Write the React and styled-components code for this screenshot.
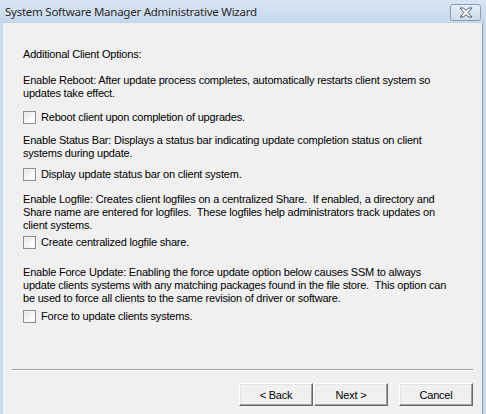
import React from "react";
import styled, { createGlobalStyle } from "styled-components";

const GlobalStyle = createGlobalStyle`
  html, body {
    margin: 0;
    padding: 0;
    background: #c9daee;
  }
`;

const sections = [
  {
    lines: [
      "Enable Reboot: After update process completes, automatically restarts client system so",
      "updates take effect.",
    ],
    label: "Reboot client upon completion of upgrades.",
    top: 13,
    gap: 11,
  },
  {
    lines: [
      "Enable Status Bar: Displays a status bar indicating update completion status on client",
      "systems during update.",
    ],
    label: "Display update status bar on client system.",
    top: 10,
    gap: 8,
  },
  {
    lines: [
      "Enable Logfile: Creates client logfiles on a centralized Share.  If enabled, a directory and",
      "Share name are entered for logfiles.  These logfiles help administrators track updates on",
      "client systems.",
    ],
    label: "Create centralized logfile share.",
    top: 12,
    gap: 4,
  },
  {
    lines: [
      "Enable Force Update: Enabling the force update option below causes SSM to always",
      "update clients systems with any matching packages found in the file store.  This option can",
      "be used to force all clients to the same revision of driver or software.",
    ],
    label: "Force to update clients systems.",
    top: 17,
    gap: 5,
  },
];

export default function App() {
  return (
    <>
      <GlobalStyle />
      <Window>
        <TitleBar>
          <Title>System Software Manager Administrative Wizard</Title>
          <CloseButton>
            <svg width="16" height="11" viewBox="0 0 16 11">
              <path
                d="M2 1h3.5l2.5 2.5 2.5-2.5h3.5l-4 4.5 4 4.5h-3.5l-2.5-2.5-2.5 2.5h-3.5l4-4.5z"
                fill="#fff"
                stroke="#4a5566"
                strokeWidth="1"
                strokeLinejoin="round"
              />
            </svg>
          </CloseButton>
        </TitleBar>
        <Client>
          <Body>
            <Heading>Additional Client Options:</Heading>
            {sections.map((s) => (
              <Section key={s.label} $top={s.top}>
                <Paragraph>
                  {s.lines.map((l) => (
                    <Line key={l}>{l}</Line>
                  ))}
                </Paragraph>
                <CheckRow $gap={s.gap}>
                  <Box />
                  <span>{s.label}</span>
                </CheckRow>
              </Section>
            ))}
          </Body>
          <Footer>
            <Separator />
            <Buttons>
              <ButtonPair>
                <Button>&lt; Back</Button>
                <Button>Next &gt;</Button>
              </ButtonPair>
              <Button>Cancel</Button>
            </Buttons>
          </Footer>
        </Client>
      </Window>
    </>
  );
}

const Window = styled.div`
  width: 486px;
  height: 414px;
  display: flex;
  flex-direction: column;
  background: #c9daee;
  padding: 0 3px 0 3px;
  box-sizing: border-box;
  overflow: hidden;
`;

const TitleBar = styled.div`
  height: 23px;
  flex: none;
  display: flex;
  align-items: flex-start;
  justify-content: space-between;
  margin: 0 -3px;
  padding: 0 5px 0 5px;
  background: linear-gradient(#dae5f3, #c6d7ec);
`;

const Title = styled.div`
  font-family: "Noto Sans", "Open Sans", sans-serif;
  font-size: 11.5px;
  letter-spacing: -0.25px;
  line-height: 23px;
  color: #2a2a2a;
  white-space: nowrap;
`;

const CloseButton = styled.div`
  width: 31px;
  height: 17px;
  margin-top: 4px;
  border: 1px solid #8b9cb4;
  border-radius: 3px;
  box-sizing: border-box;
  background: linear-gradient(#e6eef8, #cfdcec);
  display: flex;
  align-items: center;
  justify-content: center;
`;

const Client = styled.div`
  flex: 1;
  display: flex;
  flex-direction: column;
  background: #f0f0f0;
  border-right: 1px solid #8e9bb0;
`;

const Body = styled.div`
  flex: 1;
  padding: 25px 0 0 20px;
  font-family: "Liberation Sans", Arial, sans-serif;
  font-size: 11px;
  letter-spacing: -0.2px;
  line-height: 13px;
  color: #000;
`;

const Heading = styled.div`
  white-space: pre;
`;

const Section = styled.div`
  margin-top: ${(p) => p.$top}px;
`;

const Paragraph = styled.div``;

const Line = styled.div`
  white-space: pre;
`;

const CheckRow = styled.div`
  margin-top: ${(p) => p.$gap}px;
  display: flex;
  align-items: center;
  gap: 5px;
  height: 13px;
  white-space: pre;
`;

const Box = styled.span`
  width: 13px;
  height: 13px;
  box-sizing: border-box;
  border: 1px solid #8e8f8f;
  background: linear-gradient(135deg, #e0e0e0, #ffffff 70%);
  box-shadow: inset 0 0 0 1px #f4f4f4;
  flex: none;
`;

const Footer = styled.div`
  flex: none;
  padding: 0 9px 8px 9px;
`;

const Separator = styled.div`
  height: 0;
  border-top: 1px solid #a0a0a0;
  border-bottom: 1px solid #ffffff;
  margin-bottom: 12px;
`;

const Buttons = styled.div`
  display: flex;
  justify-content: flex-end;
  gap: 11px;
`;

const ButtonPair = styled.div`
  display: flex;
  gap: 1px;
`;

const Button = styled.button`
  width: 74px;
  height: 23px;
  box-sizing: border-box;
  padding: 0;
  font-family: "Liberation Sans", Arial, sans-serif;
  font-size: 11px;
  letter-spacing: -0.2px;
  color: #000;
  background: #f0f0f0;
  border: 1px solid;
  border-color: #ffffff #696969 #696969 #ffffff;
  box-shadow: inset -1px -1px 0 #a0a0a0, inset 1px 1px 0 #e3e3e3;
`;
